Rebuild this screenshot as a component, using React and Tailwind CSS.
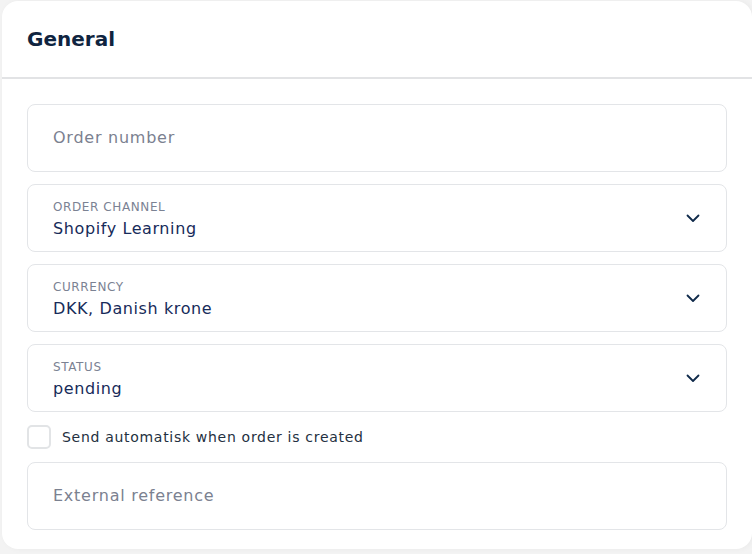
import React, { useState } from 'react'

const font = { fontFamily: '"DejaVu Sans", "Noto Sans", sans-serif' }

function Chevron() {
  return (
    <svg width="14" height="14" viewBox="0 0 14 14" fill="none" className="text-[#0f2a4a]">
      <path d="M1.5 4.5 L7 10 L12.5 4.5" stroke="currentColor" strokeWidth="1.8" strokeLinecap="round" strokeLinejoin="round" />
    </svg>
  )
}

function TextField({ placeholder }) {
  return (
    <div className='h-[68px] border border-[#e3e5e8] rounded-lg flex items-center px-[25px]'>
      <span className='text-[16px] tracking-[0.75px] text-[#7b8190]'>{placeholder}</span>
    </div>
  )
}

function SelectField({ label, value }) {
  return (
    <div className='h-[68px] border border-[#e3e5e8] rounded-lg flex items-center justify-between pl-[25px] pr-[26px]'>
      <div className='flex flex-col pt-[5px]'>
        <span className='text-[12px] leading-[14px] tracking-[0.6px] uppercase text-[#7b8293]'>{label}</span>
        <span className='text-[16px] leading-[24px] tracking-[0.6px] text-[#172b5a] mt-[3px]'>{value}</span>
      </div>
      <Chevron />
    </div>
  )
}

export default function App() {
  const [checked, setChecked] = useState(false)

  return (
    <div className='min-h-[554px] bg-[#f3f3f3] pl-[2px] pt-[1px] pb-[5px]' style={font}>
      <div className='bg-white rounded-2xl h-[548px] shadow-[2px_0_6px_rgba(0,0,0,0.04)]'>
        <div className='h-[78px] flex items-center px-[25px] border-b-2 border-[#e2e3e5]'>
          <h2 className='text-[20px] font-semibold text-[#0f2440]'>General</h2>
        </div>
        <div className='pl-[25px] pr-[25px] pt-[25px] flex flex-col gap-[12px]'>
          <TextField placeholder="Order number" />
          <SelectField label="Order channel" value="Shopify Learning" />
          <SelectField label="Currency" value="DKK, Danish krone" />
          <SelectField label="Status" value="pending" />
          <label className='h-[26px] flex items-center gap-[11px] cursor-pointer'>
            <span
              onClick={() => setChecked(!checked)}
              className='w-[24px] h-[24px] rounded-[5px] border-2 border-[#e2e4e6] bg-white'
            />
            <span className='text-[14px] tracking-[0.7px] text-[#243041]'>Send automatisk when order is created</span>
          </label>
          <TextField placeholder="External reference" />
        </div>
      </div>
    </div>
  )
}
